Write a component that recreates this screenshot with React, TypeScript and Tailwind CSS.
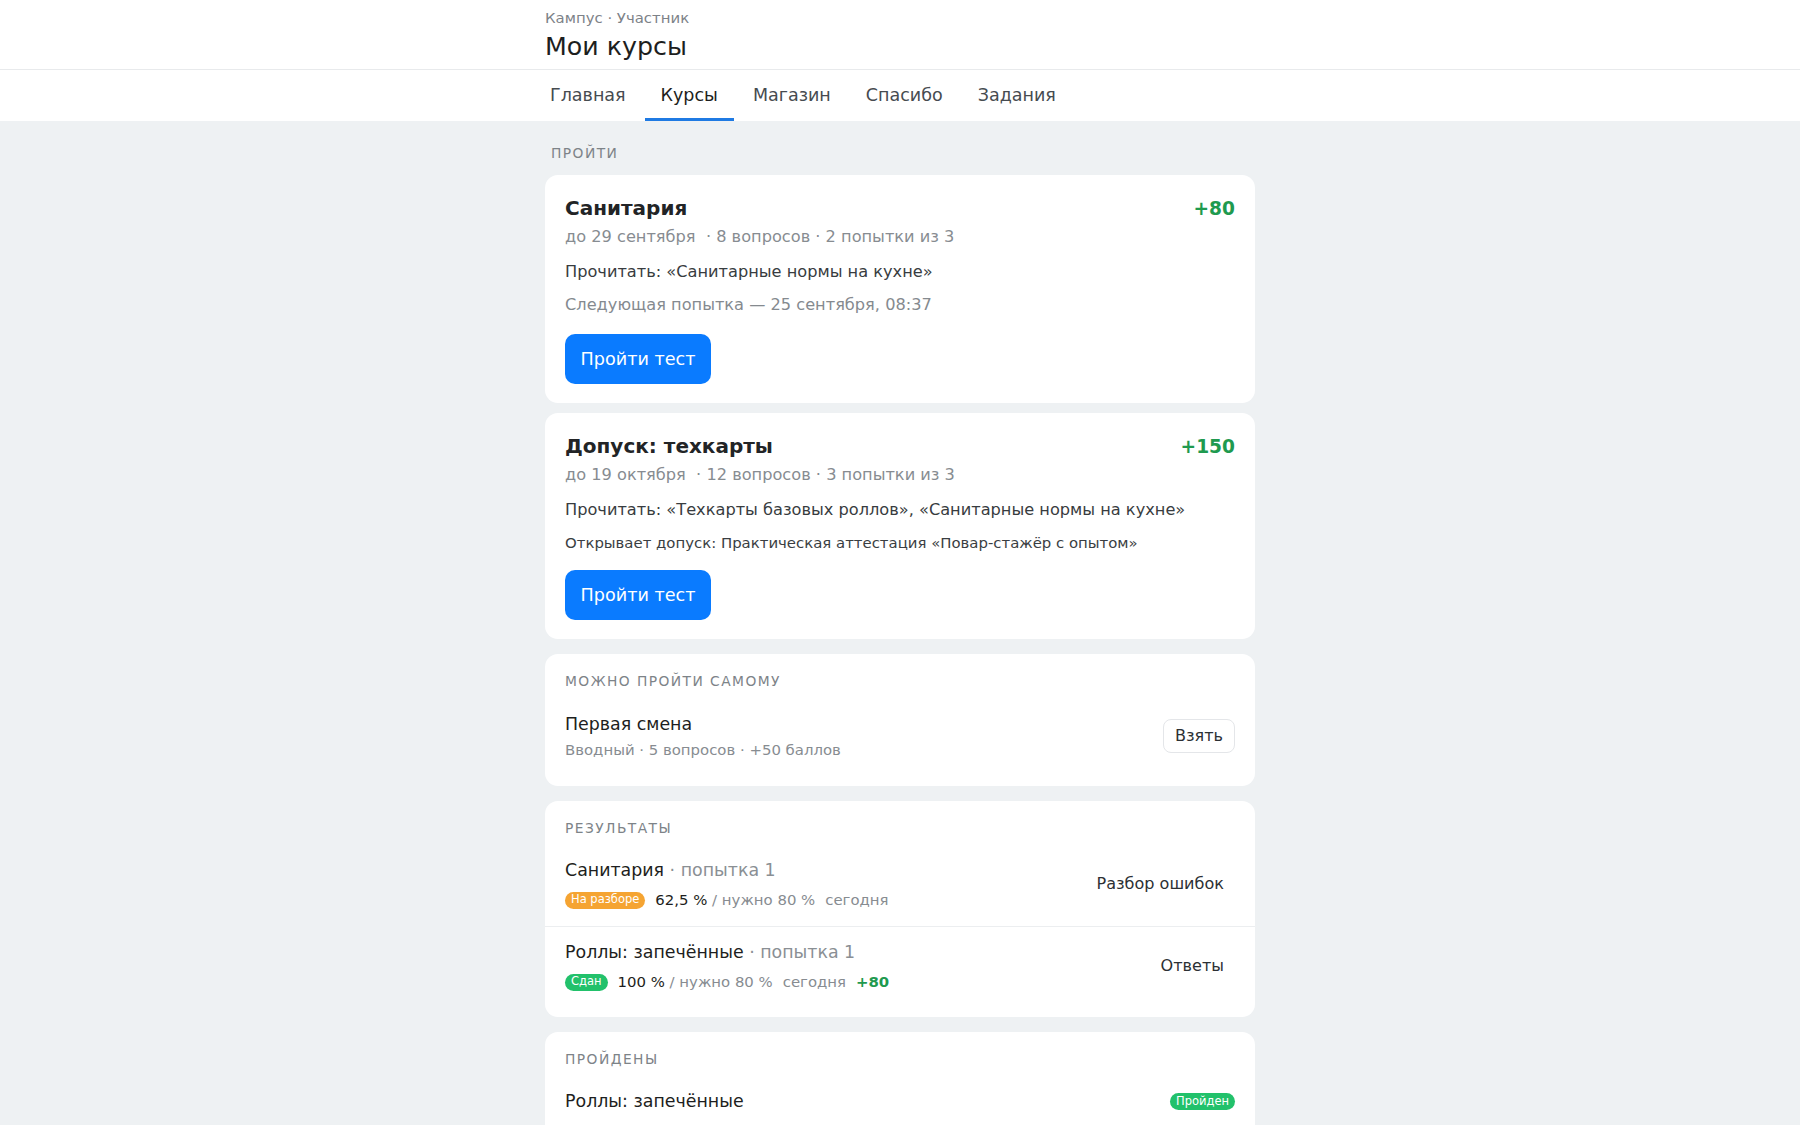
import type { ReactNode } from "react";

const tabs = ["Главная", "Курсы", "Магазин", "Спасибо", "Задания"];

type Assigned = {
  title: string;
  points: string;
  meta: string;
  read: string;
  note: string;
  noteMuted: boolean;
};

const assigned: Assigned[] = [
  {
    title: "Санитария",
    points: "+80",
    meta: "до 29 сентября\u00a0 · 8 вопросов · 2 попытки из 3",
    read: "Прочитать: «Санитарные нормы на кухне»",
    note: "Следующая попытка — 25 сентября, 08:37",
    noteMuted: true,
  },
  {
    title: "Допуск: техкарты",
    points: "+150",
    meta: "до 19 октября\u00a0 · 12 вопросов · 3 попытки из 3",
    read: "Прочитать: «Техкарты базовых роллов», «Санитарные нормы на кухне»",
    note: "Открывает допуск: Практическая аттестация «Повар-стажёр с опытом»",
    noteMuted: false,
  },
];

function Badge({ tone, children }: { tone: "orange" | "green"; children: ReactNode }) {
  return (
    <span
      className={
        "inline-flex h-[17px] items-center rounded-full px-[6px] text-[11.5px] leading-none text-white " +
        (tone === "orange" ? "bg-[#f5a432]" : "bg-[#22c16b]")
      }
    >
      {children}
    </span>
  );
}

function SectionCard({ label, children }: { label: string; children: ReactNode }) {
  return (
    <section className="rounded-[13px] bg-white pb-[9px]">
      <div className="px-5 pt-[17px] pb-[7px] text-[13.8px] leading-[20px] tracking-[1.45px] text-[#7d8388]">
        {label}
      </div>
      {children}
    </section>
  );
}

function AssignedCard({ item }: { item: Assigned }) {
  return (
    <div className="rounded-[13px] bg-white px-5 pt-5 pb-[19px]">
      <div className="flex items-baseline justify-between">
        <h2 className="text-[20px] font-bold leading-[27px] text-[#222426]">{item.title}</h2>
        <span className="text-[18.6px] font-bold leading-[27px] text-[#1f9a4f]">{item.points}</span>
      </div>
      <p className="mt-[3px] text-[16.2px] leading-[24px] text-[#878c91]">{item.meta}</p>
      <p className="mt-[11px] text-[16.2px] leading-[24px] text-[#383c40]">{item.read}</p>
      {item.noteMuted ? (
        <p className="mt-[9px] text-[16.2px] leading-[24px] text-[#858a8f]">{item.note}</p>
      ) : (
        <p className="mt-[11px] text-[14.9px] leading-[21px] text-[#3a3e42]">{item.note}</p>
      )}
      <button
        type="button"
        className={
          "flex h-[50px] w-[146px] items-center justify-center rounded-[10px] bg-[#0a7bff] text-[17.6px] text-white " +
          (item.noteMuted ? "mt-[17px]" : "mt-4")
        }
      >
        Пройти тест
      </button>
    </div>
  );
}

export default function App() {
  return (
    <div className="min-h-screen bg-[#eef1f3] font-['DejaVu_Sans',sans-serif]">
      <header className="bg-white">
        <div className="h-[70px] border-b border-[#e8eaec]">
          <div className="mx-auto w-[710px] pt-2">
            <div className="text-[14.9px] leading-[20px] text-[#7d8288]">Кампус · Участник</div>
            <h1 className="mt-[3px] text-[25.3px] leading-[32px] text-[#1d1e20]">Мои курсы</h1>
          </div>
        </div>
        <nav className="mx-auto flex h-[51px] w-[710px]">
          <div className="-ml-[11px] flex gap-[3px]">
            {tabs.map((tab) => (
              <button
                key={tab}
                type="button"
                className={
                  "flex h-full items-center border-b-[3px] px-4 pt-[3px] text-[17.5px] " +
                  (tab === "Курсы"
                    ? "border-[#1f7ae3] text-[#1d1e20]"
                    : "border-transparent text-[#464b50]")
                }
              >
                {tab}
              </button>
            ))}
          </div>
        </nav>
      </header>

      <main className="mx-auto w-[710px] pt-[22px] pb-10">
        <div className="px-[6px] text-[13.8px] leading-[20px] tracking-[1.45px] text-[#7d8388]">ПРОЙТИ</div>
        <div className="mt-[12px] flex flex-col gap-[10px]">
          {assigned.map((item) => (
            <AssignedCard key={item.title} item={item} />
          ))}
        </div>

        <div className="mt-[15px] flex flex-col gap-[15px]">
          <SectionCard label="МОЖНО ПРОЙТИ САМОМУ">
            <div className="flex items-center justify-between px-5 pt-[14px] pb-[17px]">
              <div>
                <div className="text-[17.4px] leading-[25px] text-[#1d1e20]">Первая смена</div>
                <div className="mt-[3px] text-[14.9px] leading-[20px] text-[#878c91]">
                  Вводный · 5 вопросов · +50 баллов
                </div>
              </div>
              <button
                type="button"
                className="flex h-[34px] items-center rounded-[8px] border border-[#e4e6e9] px-[11px] text-[16.07px] text-[#2c3034]"
              >
                Взять
              </button>
            </div>
          </SectionCard>

          <SectionCard label="РЕЗУЛЬТАТЫ">
            <div className="flex items-center justify-between border-b border-[#eceef0] px-5 pt-[13px] pb-[16px]">
              <div>
                <div className="text-[17.4px] leading-[25px] text-[#1d1e20]">
                  Санитария <span className="text-[#8a8f94]">· попытка 1</span>
                </div>
                <div className="mt-[7px] flex h-[20px] items-center gap-[10px] text-[14.9px]">
                  <Badge tone="orange">На разборе</Badge>
                  <span className="text-[#1d1e20]">
                    62,5 % <span className="text-[#878c91]">/ нужно 80 %</span>
                  </span>
                  <span className="text-[#878c91]">сегодня</span>
                </div>
              </div>
              <button type="button" className="px-[11px] text-[16.07px] text-[#2c3034]">
                Разбор ошибок
              </button>
            </div>
            <div className="flex items-center justify-between px-5 pt-[13px] pb-[16px]">
              <div>
                <div className="text-[17.4px] leading-[25px] text-[#1d1e20]">
                  Роллы: запечённые <span className="text-[#8a8f94]">· попытка 1</span>
                </div>
                <div className="mt-[7px] flex h-[20px] items-center gap-[10px] text-[14.9px]">
                  <Badge tone="green">Сдан</Badge>
                  <span className="text-[#1d1e20]">
                    100 % <span className="text-[#878c91]">/ нужно 80 %</span>
                  </span>
                  <span className="text-[#878c91]">сегодня</span>
                  <span className="font-bold text-[#1f9a4f]">+80</span>
                </div>
              </div>
              <button type="button" className="px-[11px] text-[16.07px] text-[#2c3034]">
                Ответы
              </button>
            </div>
          </SectionCard>

          <SectionCard label="ПРОЙДЕНЫ">
            <div className="flex items-center justify-between px-5 pt-[13px] pb-[16px]">
              <div className="text-[17.4px] leading-[25px] text-[#1d1e20]">Роллы: запечённые</div>
              <Badge tone="green">Пройден</Badge>
            </div>
          </SectionCard>
        </div>
      </main>
    </div>
  );
}
